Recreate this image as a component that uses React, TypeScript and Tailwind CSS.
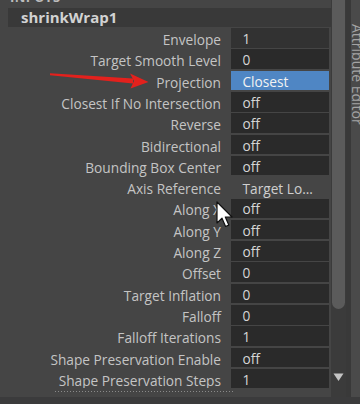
import React from "react";

type Kind = "field" | "blue" | "none";
const rows: [string, string, Kind][] = [
  ["Envelope", "1", "field"],
  ["Target Smooth Level", "0", "field"],
  ["Projection", "Closest", "blue"],
  ["Closest If No Intersection", "off", "field"],
  ["Reverse", "off", "field"],
  ["Bidirectional", "off", "field"],
  ["Bounding Box Center", "off", "field"],
  ["Axis Reference", "Target Lo...", "none"],
  ["Along X", "off", "field"],
  ["Along Y", "off", "field"],
  ["Along Z", "off", "field"],
  ["Offset", "0", "field"],
  ["Target Inflation", "0", "field"],
  ["Falloff", "0", "field"],
  ["Falloff Iterations", "1", "field"],
  ["Shape Preservation Enable", "off", "field"],
  ["Shape Preservation Steps", "1", "field"],
];

function Row({ label, value, kind, first }: { label: string; value: string; kind: Kind; first: boolean }) {
  return (
    <div className="h-[21.3px] shrink-0 flex items-center">
      <div className="w-[221px] text-right whitespace-nowrap text-[#c4c4c4] leading-none translate-y-[1.5px]">{label}</div>
      {kind === "none" ? (
        <div className="ml-[21.5px] text-[#cfcfcf] leading-none whitespace-nowrap translate-y-[1.5px]">{value}</div>
      ) : (
        <div
          className={
            kind === "blue"
              ? "ml-[9.5px] w-[98px] h-[19.5px] flex items-center pl-[12px] bg-[#4f86c4] text-[#f2f2f2] leading-none"
              : first
              ? "ml-[9.5px] w-[98px] h-[19.5px] flex items-center pl-[12px] bg-[#323232] text-[#d6d6d6] leading-none"
              : "ml-[9.5px] w-[98px] h-[19.5px] flex items-center pl-[12px] bg-[#2a2a2a] text-[#d6d6d6] leading-none"
          }
        >
          <span className="translate-y-[1px]">{value}</span>
        </div>
      )}
    </div>
  );
}

export default function App() {
  return (
    <div className="w-[360px] h-[404px] bg-[#454545] relative overflow-hidden flex flex-col font-['Open_Sans','Noto_Sans',sans-serif] text-[13.7px]">
      <div className="flex h-[397px]">
        <div className="w-[331px] flex flex-col">
          <div className="h-[8px] shrink-0">
            <div className="-mt-[11px] ml-[10px] font-bold text-[13px] leading-[16px] text-[#bdbdbd] tracking-[0.5px]">INPUTS</div>
          </div>
          <div className="h-[19px] shrink-0 ml-[8px] bg-[#393939] flex items-center pl-[13px] font-bold text-[15px] text-[#d2d2d2] leading-none">
            shrinkWrap1
          </div>
          <div className="h-[361px] mt-[0.3px] overflow-hidden flex flex-col shrink-0">
            {rows.map((r, i) => (
              <Row key={r[0]} label={r[0]} value={r[1]} kind={r[2]} first={i === 0} />
            ))}
          </div>
          <div className="mt-[2.5px] ml-[55px] w-[178px] h-[1px] bg-[linear-gradient(to_right,#8a8a8a_1px,transparent_1px)] bg-[length:3px_1px]" />
        </div>
        <div className="w-[15px] bg-[#3b3b3b] flex flex-col">
          <div className="ml-[1px] w-[13px] h-[309px] bg-[#5b5b5b] rounded-b-[7px]" />
          <div className="flex-1" />
          <svg width="12" height="9" viewBox="0 0 12 9" className="ml-[2px] mb-[15px]">
            <polygon points="0.5,0.5 10.5,0.5 5.5,8" fill="#c4c4c4" />
          </svg>
        </div>
        <div className="w-[5px] bg-[#393939]" />
        <div className="flex-1 bg-[#4a4a4a] relative overflow-hidden">
          <div className="absolute left-[-2px] top-[24px] [writing-mode:vertical-rl] text-[14px] leading-[16px] text-[#a4a4a4] whitespace-nowrap">
            Attribute Editor
          </div>
        </div>
      </div>
      <div className="h-[7px] bg-[#3b3b3c]" />

      <svg className="absolute inset-0 pointer-events-none" width="360" height="404" viewBox="0 0 360 404">
        <polygon points="50,73.2 133,78.5 133,83.5 50,75.2" fill="#e3211d" />
        <polygon points="130,73.5 148.5,82 130.5,88.5 134,81" fill="#e3211d" />
      </svg>
      <svg className="absolute left-[215px] top-[200px] pointer-events-none" width="22" height="30" viewBox="0 0 22 30">
        <path
          d="M2 2 L2 23 L7 18.2 L10.6 26.5 L13.8 25.1 L10.3 17 L17 17 Z"
          fill="#ffffff"
          stroke="#111111"
          strokeWidth="1.2"
          strokeLinejoin="round"
        />
      </svg>
    </div>
  );
}
